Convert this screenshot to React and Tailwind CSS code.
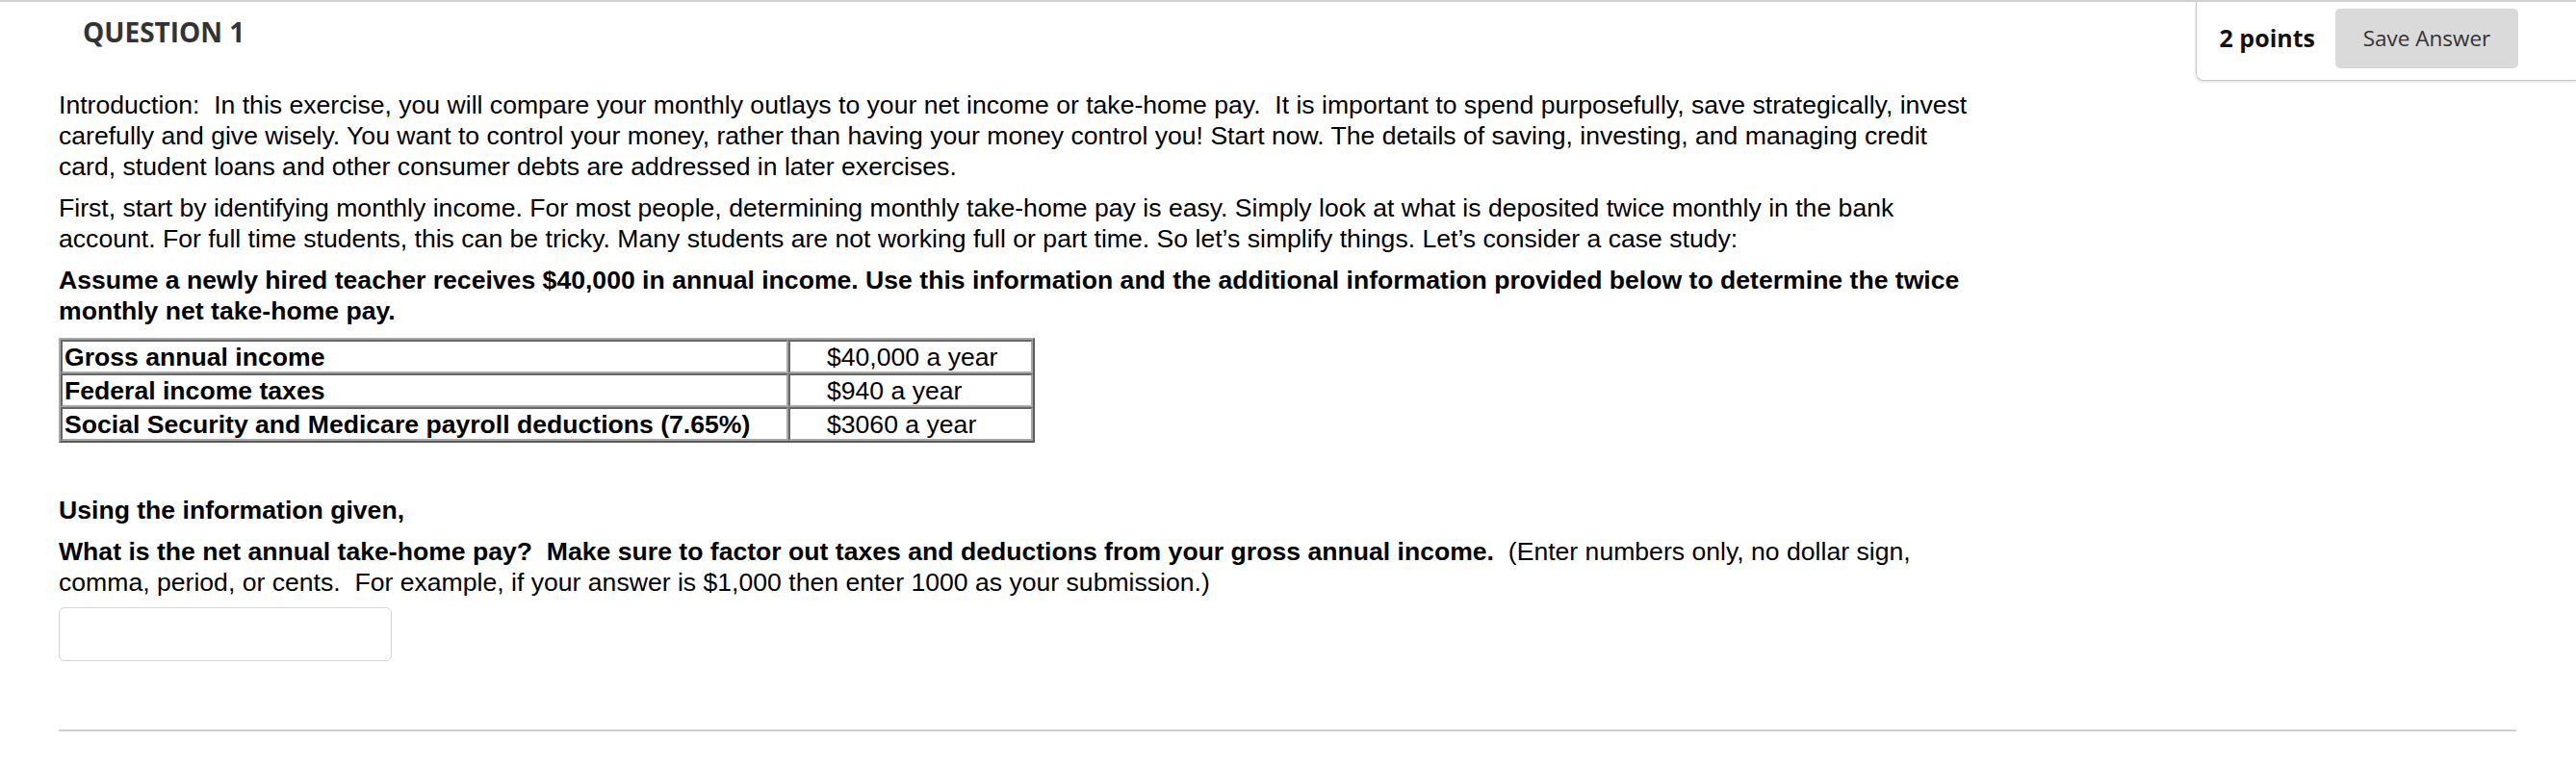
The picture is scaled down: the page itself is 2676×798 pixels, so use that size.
import React from "react";

const arial = { fontFamily: '"Liberation Sans", Arial, sans-serif' };

export default function App() {
  const rows = [
    ["Gross annual income", "$40,000 a year"],
    ["Federal income taxes", "$940 a year"],
    ["Social Security and Medicare payroll deductions (7.65%)", "$3060 a year"],
  ];
  return (
    <div className="w-[2676px] h-[798px] bg-white border-t-[2px] border-[#d0d0d0] overflow-hidden">
      <div className="flex items-start justify-between h-[82px]">
        <h3 className="ml-[86px] mt-[13px] text-[28px] font-bold text-[#333] font-['Open_Sans',sans-serif] leading-[36px]">
          QUESTION 1
        </h3>
        <div className="flex items-center h-[82px] pl-[24px] pr-[60px] pt-[0px] pb-[6px] border-l border-b border-[#c8c8c8] rounded-bl-[8px] shadow-[0_1px_3px_rgba(0,0,0,0.15)] font-['Open_Sans',sans-serif]">
          <span className="text-[25px] font-bold text-[#111] mr-[21px]">2 points</span>
          <button className="w-[190px] h-[62px] bg-[#dadada] rounded-[5px] text-[22.5px] text-[#333]">
            Save Answer
          </button>
        </div>
      </div>

      <div className="pl-[61px] pr-[62px] text-black" style={arial}>
        <div className="w-[2000px] text-[26.6px] leading-[32px]">
          <p className="mt-[9px] whitespace-pre-wrap">
            {"Introduction:  In this exercise, you will compare your monthly outlays to your net income or take-home pay.  It is important to spend purposefully, save strategically, invest carefully and give wisely. You want to control your money, rather than having your money control you! Start now. The details of saving, investing, and managing credit card, student loans and other consumer debts are addressed in later exercises."}
          </p>
          <p className="mt-[11px]">
            First, start by identifying monthly income. For most people, determining monthly take-home pay is easy. Simply look at what is deposited twice monthly in the bank account. For full time students, this can be tricky. Many students are not working full or part time. So let’s simplify things. Let’s consider a case study:
          </p>
          <p className="mt-[11px] font-bold">
            Assume a newly hired teacher receives $40,000 in annual income. Use this information and the additional information provided below to determine the twice monthly net take-home pay.
          </p>
        </div>

        <table className="mt-[12px] border-separate border-spacing-0 border-[2px] border-t-[#a8a8a8] border-l-[#a8a8a8] border-r-[#5a5a5a] border-b-[#5a5a5a] text-[26.6px] leading-[30px]">
          <tbody>
            {rows.map(([a, b]) => (
              <tr key={a}>
                <td className="w-[756px] h-[35px] px-[2px] font-bold border-[2px] border-t-[#666] border-l-[#666] border-r-[#a8a8a8] border-b-[#a8a8a8] align-middle">
                  {a}
                </td>
                <td className="w-[254px] h-[35px] pl-[38px] border-[2px] border-t-[#666] border-l-[#666] border-r-[#a8a8a8] border-b-[#a8a8a8] align-middle">
                  {b}
                </td>
              </tr>
            ))}
          </tbody>
        </table>

        <div className="w-[2000px] text-[26.6px] leading-[32px]">
          <p className="mt-[54px] font-bold">Using the information given,</p>
          <p className="mt-[11px] whitespace-pre-wrap">
            <span className="font-bold">
              {"What is the net annual take-home pay?  Make sure to factor out taxes and deductions from your gross annual income."}
            </span>
            {"  (Enter numbers only, no dollar sign, comma, period, or cents.  For example, if your answer is $1,000 then enter 1000 as your submission.)"}
          </p>
        </div>

        <input
          type="text"
          className="block mt-[10px] w-[346px] h-[56px] border border-[#d4d4d4] rounded-[6px] bg-white"
        />

        <div className="mt-[71px] w-[2553px] border-t-[2px] border-[#cfcfcf]" />
      </div>
    </div>
  );
}
